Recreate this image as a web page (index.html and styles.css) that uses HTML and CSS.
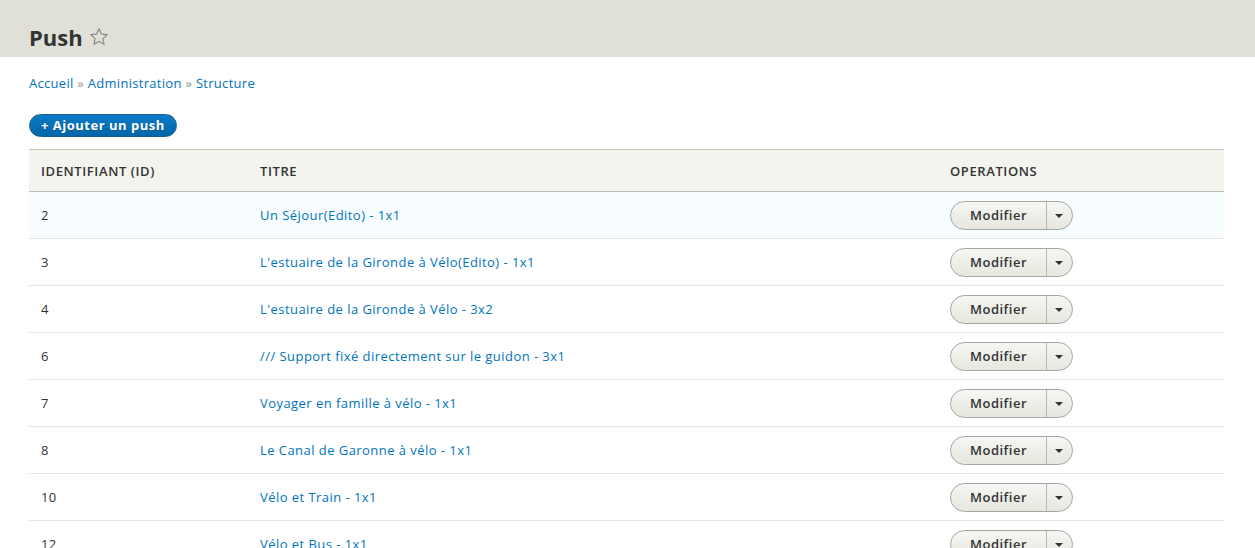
FILE: index.html
```html
<!DOCTYPE html>
<html lang="fr">
<head>
    <meta charset="UTF-8">
    <title>Push</title>
    <link rel="stylesheet" href="styles.css">
</head>
<body>
    <div class="header">
        <h1 class="page-title">Push
            <svg class="star" width="20" height="20" viewBox="0 0 20 20"><path d="M10 1.8l2.4 5.3 5.8.6-4.3 3.9 1.2 5.7L10 14.4l-5.1 2.9 1.2-5.7L1.8 7.7l5.8-.6z" fill="none" stroke="#8c8c84" stroke-width="1.2" stroke-linejoin="round"/></svg>
        </h1>
    </div>
    <div class="content">
        <div class="breadcrumb">
            <a href="#">Accueil</a> » <a href="#">Administration</a> » <a href="#">Structure</a>
        </div>
        <a class="action" href="#">+ Ajouter un push</a>
        <table class="list">
            <thead>
                <tr>
                    <th class="c-id">Identifiant (ID)</th>
                    <th class="c-title">Titre</th>
                    <th>Operations</th>
                </tr>
            </thead>
            <tbody id="rows"></tbody>
        </table>
    </div>

    <script>
        let data = [
            [2, 'Un Séjour(Edito) - 1x1'],
            [3, "L'estuaire de la Gironde à Vélo(Edito) - 1x1"],
            [4, "L'estuaire de la Gironde à Vélo - 3x2"],
            [6, '/// Support fixé directement sur le guidon - 3x1'],
            [7, 'Voyager en famille à vélo - 1x1'],
            [8, 'Le Canal de Garonne à vélo - 1x1'],
            [10, 'Vélo et Train - 1x1'],
            [12, 'Vélo et Bus - 1x1']
        ]
        let tbody = document.querySelector('#rows')
        data.forEach(function (item, i) {
            let tr = document.createElement('tr')
            if (i === 0) tr.className = 'hl'
            tr.innerHTML = `
                <td>${item[0]}</td>
                <td><a href="#">${item[1]}</a></td>
                <td><span class="drop"><span class="main">Modifier</span><span class="arrow"></span></span></td>
            `
            tbody.appendChild(tr)
        })
    </script>
</body>
</html>
```

FILE: styles.css
```css
*{
    margin: 0;
    padding: 0;
    box-sizing: border-box;
}

body{
    font-family: "Open Sans", "DejaVu Sans", sans-serif;
    font-size: 13px;
    letter-spacing: 0.3px;
    color: #333;
    background: #fff;
}

a{
    color: #0074bd;
    text-decoration: none;
}

.header{
    background: #e0e0d8;
    height: 57px;
    padding: 22px 29px 0;
}

.page-title{
    font-size: 22px;
    font-weight: 700;
    letter-spacing: 0;
    color: #333;
    line-height: 30px;
    display: flex;
    align-items: center;
    gap: 6px;
}

.content{
    padding: 17px 31px 0 29px;
}

.breadcrumb{
    color: #999;
    line-height: 18px;
    font-size: 13px;
}

.action{
    display: inline-block;
    margin-top: 22px;
    height: 23px;
    line-height: 21px;
    padding: 0 11px;
    border-radius: 12px;
    background: linear-gradient(#0a7bc7, #0066a8);
    border: 1px solid #1e5c90;
    color: #fff;
    font-weight: 700;
    font-size: 13px;
    letter-spacing: 0.5px;
    text-shadow: 0 1px 1px #1e5c90;
}

.list{
    width: 100%;
    margin-top: 12px;
    border-collapse: collapse;
}

.list th{
    background: #f3f4ee;
    border-top: 1px solid #bfbfba;
    border-bottom: 1px solid #bfbfba;
    text-align: left;
    text-transform: uppercase;
    font-weight: 600;
    letter-spacing: 0.6px;
    color: #333;
    height: 42px;
    padding: 0 12px;
}

.list .c-id{
    width: 219px;
}

.list .c-title{
    width: 690px;
}

.list td{
    height: 47px;
    padding: 0 12px;
    border-bottom: 1px solid #e6e4df;
    color: #333;
}

.list td a{
    letter-spacing: 0.45px;
}

.list tr.hl td{
    background: #f7fcff;
}

.drop{
    display: inline-flex;
    height: 29px;
    border: 1px solid #a6a6a6;
    border-radius: 15px;
    background: linear-gradient(#f6f6f3, #e7e7df);
    overflow: hidden;
}

.drop .main{
    width: 96px;
    text-align: center;
    line-height: 27px;
    font-weight: 600;
    letter-spacing: 0.5px;
    color: #333;
    border-right: 1px solid #b8b8b0;
}

.drop .arrow{
    width: 25px;
    position: relative;
}

.drop .arrow::after{
    content: "";
    position: absolute;
    left: 8px;
    top: 12px;
    border-left: 4px solid transparent;
    border-right: 4px solid transparent;
    border-top: 4px solid #333;
}
```
